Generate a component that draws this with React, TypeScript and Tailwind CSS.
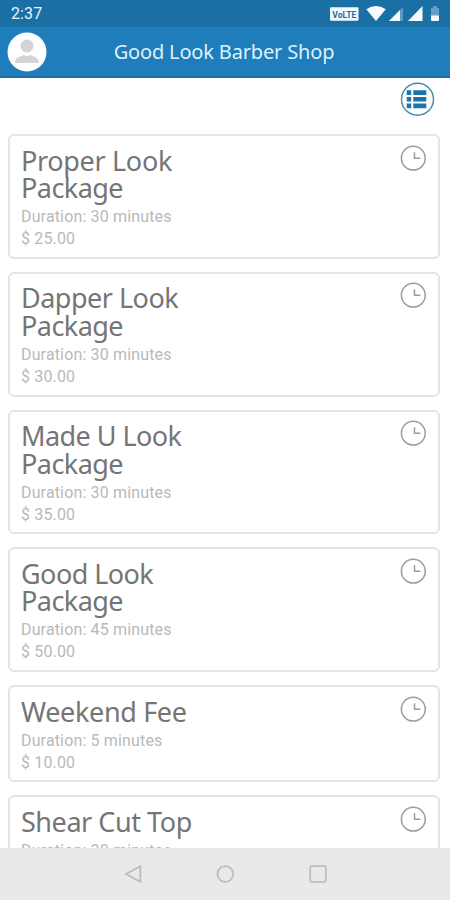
import React from "react";

type Service = { lines: { text: string; tracking: string }[]; minutes: number; price: string };

const pkg = { text: "Package", tracking: "tracking-[-0.55px]" };

const services: Service[] = [
  { lines: [{ text: "Proper Look", tracking: "tracking-[-0.32px]" }, pkg], minutes: 30, price: "25.00" },
  { lines: [{ text: "Dapper Look", tracking: "tracking-[-0.5px]" }, pkg], minutes: 30, price: "30.00" },
  { lines: [{ text: "Made U Look", tracking: "tracking-[-0.55px]" }, pkg], minutes: 30, price: "35.00" },
  { lines: [{ text: "Good Look", tracking: "tracking-[-0.55px]" }, pkg], minutes: 45, price: "50.00" },
  { lines: [{ text: "Weekend Fee", tracking: "tracking-[-0.35px]" }], minutes: 5, price: "10.00" },
  { lines: [{ text: "Shear Cut Top", tracking: "tracking-[-0.45px]" }], minutes: 30, price: "20.00" },
];

function Clock() {
  return (
    <svg className="h-[27px] w-[27px] shrink-0" viewBox="0 0 27 27" fill="none" stroke="#9c9c9c">
      <circle cx="13.3" cy="13.2" r="11.9" strokeWidth="1.5" />
      <path d="M14.500 7.200v6h5.800" strokeWidth="1.5" />
    </svg>
  );
}

function Card({ service }: { service: Service }) {
  return (
    <article className="flex shrink-0 items-start justify-between rounded-[6px] border-2 border-[#e4e4e4] bg-white pt-[10.5px] pr-[11px] pb-[6.75px] pl-[11px]">
      <div>
        <h2 className="font-['Noto_Sans',sans-serif] text-[27px] leading-[27.5px] text-[#757575]">
          {service.lines.map((l) => (
            <span key={l.text} className={"block whitespace-nowrap " + l.tracking}>{l.text}</span>
          ))}
        </h2>
        <div className="pt-[4.5px] font-[Roboto,sans-serif] text-[16px] leading-[22px] tracking-[0.15px] text-[#b9b9b9]">
          <p>Duration: {service.minutes} minutes</p>
          <p>$ {service.price}</p>
        </div>
      </div>
      <div className="-mt-[2px]"><Clock /></div>
    </article>
  );
}

function StatusIcons() {
  return (
    <svg className="h-7 w-[120px]" viewBox="330 0 120 28" fill="#f4fafd">
      <rect x="330" y="7.300" width="28.500" height="13.500" rx="1" />
      <text x="332.3" y="17.6" fontFamily="Roboto, sans-serif" fontSize="9.500" fontWeight="700" textLength="24" lengthAdjust="spacingAndGlyphs" fill="#1a6fa5">VoLTE</text>
      <path d="M366.300 9.3Q376 2.700 385.800 9.3L376 21Z" />
      <path d="M389 21L403 7V21Z" fillOpacity=".3" />
      <path d="M389 21L400 10V21Z" />
      <path d="M408 21L422.500 6V21Z" />
      <path d="M431 8h2V6h4v2h2v8h-8Z" fillOpacity=".35" />
      <path d="M431 15.500h8V20q0 1-1 1h-6q-1 0-1-1Z" />
    </svg>
  );
}

export default function App() {
  return (
    <div className="flex h-[900px] w-[450px] flex-col overflow-hidden bg-white">
      <div className="flex h-[27px] shrink-0 items-center justify-between bg-[#1a6fa5] pl-[11px]">
        <span className="font-[Roboto,sans-serif] text-[16px] leading-7 tracking-[0.1px] text-[#e5f5fb]">2:37</span>
        <StatusIcons />
      </div>
      <header className="grid h-[51px] shrink-0 grid-cols-[1fr_auto_1fr] items-center border-b-2 border-[#176ca6] bg-[#1f7dbb] pr-[9px] pl-[7px]">
        <svg className="h-10 w-10" viewBox="0 0 40 40">
          <circle cx="20" cy="20" r="19.500" fill="#fff" />
          <circle cx="20" cy="14" r="6.500" fill="#d2d4d6" />
          <path d="M8 31q0-5 5-6.500l4-1.500q3 2 6 0l4 1.500q5 1.500 5 6.500Z" fill="#d2d4d6" />
        </svg>
        <h1 className="pt-px font-['Noto_Sans',sans-serif] text-[20px] leading-7 tracking-[-0.16px] text-[#def2fb]">Good Look Barber Shop</h1>
        <span />
      </header>
      <div className="flex h-14 shrink-0 justify-end pt-[4px] pr-[15px]">
        <svg className="h-[35px] w-[35px]" viewBox="0 0 35 35">
          <circle cx="17.500" cy="17.200" r="16" fill="none" stroke="#4388a8" strokeWidth="1.400" />
          <g fill="#1b74ad">
            <path d="M6.700 8.300h4.500v4.700H6.700zM6.700 14.900h4.500v4.700H6.700zM6.700 21.500h4.500v4.700H6.700z" />
            <path d="M13.300 8.300h13v4.700h-13zM13.300 14.900h13v4.700h-13zM13.300 21.500h13v4.700h-13z" />
          </g>
        </svg>
      </div>
      <main className="flex min-h-0 flex-1 flex-col gap-[13px] overflow-hidden pr-[10px] pl-[8px]">
        {services.map((s) => <Card key={s.lines[0].text} service={s} />)}
      </main>
      <nav className="flex h-[52px] shrink-0 items-center justify-center gap-[73px] bg-[#e9e9e9]">
        <svg className="h-5 w-5" viewBox="0 0 20 20" fill="none" stroke="#bdbdbd" strokeWidth="1.800"><path d="M18.300 2.300v15.400L4 10Z" /></svg>
        <svg className="h-5 w-5" viewBox="0 0 20 20" fill="none" stroke="#bdbdbd" strokeWidth="1.800"><circle cx="10.300" cy="10" r="7.800" /></svg>
        <svg className="h-5 w-5" viewBox="0 0 20 20" fill="none" stroke="#bdbdbd" strokeWidth="1.800"><rect x="2.200" y="2.200" width="15.600" height="15.600" rx="1.500" /></svg>
      </nav>
    </div>
  );
}
